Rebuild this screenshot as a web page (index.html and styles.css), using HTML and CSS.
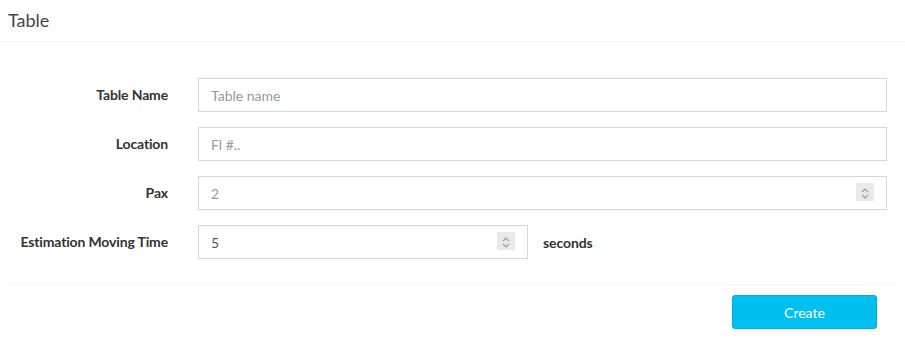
FILE: index.html
```html
<!DOCTYPE html>
<html>
<head>
<meta charset="utf-8">
<link rel="stylesheet" href="styles.css">
</head>
<body>
<div class="box">
  <div class="box-header"><h3 class="box-title">Table</h3></div>
  <form class="form">
    <div class="box-body">
      <div class="row">
        <label class="lbl">Table Name</label>
        <div class="field"><input class="ctl" type="text" placeholder="Table name"></div>
      </div>
      <div class="row">
        <label class="lbl">Location</label>
        <div class="field"><input class="ctl" type="text" placeholder="Fl #.."></div>
      </div>
      <div class="row">
        <label class="lbl">Pax</label>
        <div class="field">
          <div class="num">
            <input class="ctl" type="text" placeholder="2">
            <span class="spin"><svg width="18" height="18" viewBox="0 0 18 18"><path d="M6 9 L9 6 L12 9" fill="none" stroke="#9a9aa2" stroke-width="1.2"/><path d="M6 12 L9 15 L12 12" fill="none" stroke="#9a9aa2" stroke-width="1.2"/></svg></span>
          </div>
        </div>
      </div>
      <div class="row">
        <label class="lbl">Estimation Moving Time</label>
        <div class="field inline">
          <div class="num short">
            <input class="ctl" type="text" value="5">
            <span class="spin"><svg width="18" height="18" viewBox="0 0 18 18"><path d="M6 9 L9 6 L12 9" fill="none" stroke="#9a9aa2" stroke-width="1.2"/><path d="M6 12 L9 15 L12 12" fill="none" stroke="#9a9aa2" stroke-width="1.2"/></svg></span>
          </div>
          <span class="unit">seconds</span>
        </div>
      </div>
    </div>
    <div class="box-footer">
      <button type="button" class="btn">Create</button>
    </div>
  </form>
</div>
</body>
</html>
```
FILE: styles.css
```css
* { box-sizing: border-box; }
html, body { margin: 0; padding: 0; background: #fff; }
body {
  font-family: "Lato", "Liberation Sans", sans-serif;
  font-size: 14px;
  color: #333;
}
.box-header {
  padding: 10px 8px;
  border-bottom: 1px solid #f4f4f4;
  height: 42px;
}
.box-title {
  margin: 0;
  font-size: 18px;
  font-weight: 400;
  line-height: 21px;
  color: #444;
}
.box-body {
  padding: 36px 18px 10px 8px;
  display: flex;
  flex-direction: column;
  gap: 15px;
}
.row {
  display: grid;
  grid-template-columns: 160px 1fr;
  column-gap: 30px;
  align-items: center;
}
.lbl {
  text-align: right;
  font-weight: 700;
  color: #333;
  line-height: 20px;
  letter-spacing: -0.15px;
}
.field.inline {
  display: flex;
  align-items: center;
  gap: 15px;
}
.ctl {
  display: block;
  width: 100%;
  height: 34px;
  padding: 6px 12px;
  border: 1px solid #d2d6de;
  border-radius: 0;
  font-family: inherit;
  font-size: 14px;
  color: #555;
  background: #fff;
  outline: none;
}
.ctl::placeholder { color: #999; }
.num { position: relative; }
.num.short { width: 330px; }
.spin {
  position: absolute;
  right: 13px;
  top: 7px;
  width: 18px;
  height: 18px;
  background: #e9e9ed;
  display: block;
}
.spin svg { display: block; }
.unit {
  font-weight: 700;
  color: #333;
  letter-spacing: -0.1px;
}
.box-footer {
  margin: 15px 8px 0 8px;
  border-top: 1px solid #f4f4f4;
  padding: 10px 20px 10px 0;
  display: flex;
  justify-content: flex-end;
}
.btn {
  width: 145px;
  height: 34px;
  background: #00c0ef;
  border: 1px solid #00acd6;
  border-radius: 3px;
  color: #fff;
  font-family: inherit;
  font-size: 14px;
  padding: 6px 12px;
}
```
